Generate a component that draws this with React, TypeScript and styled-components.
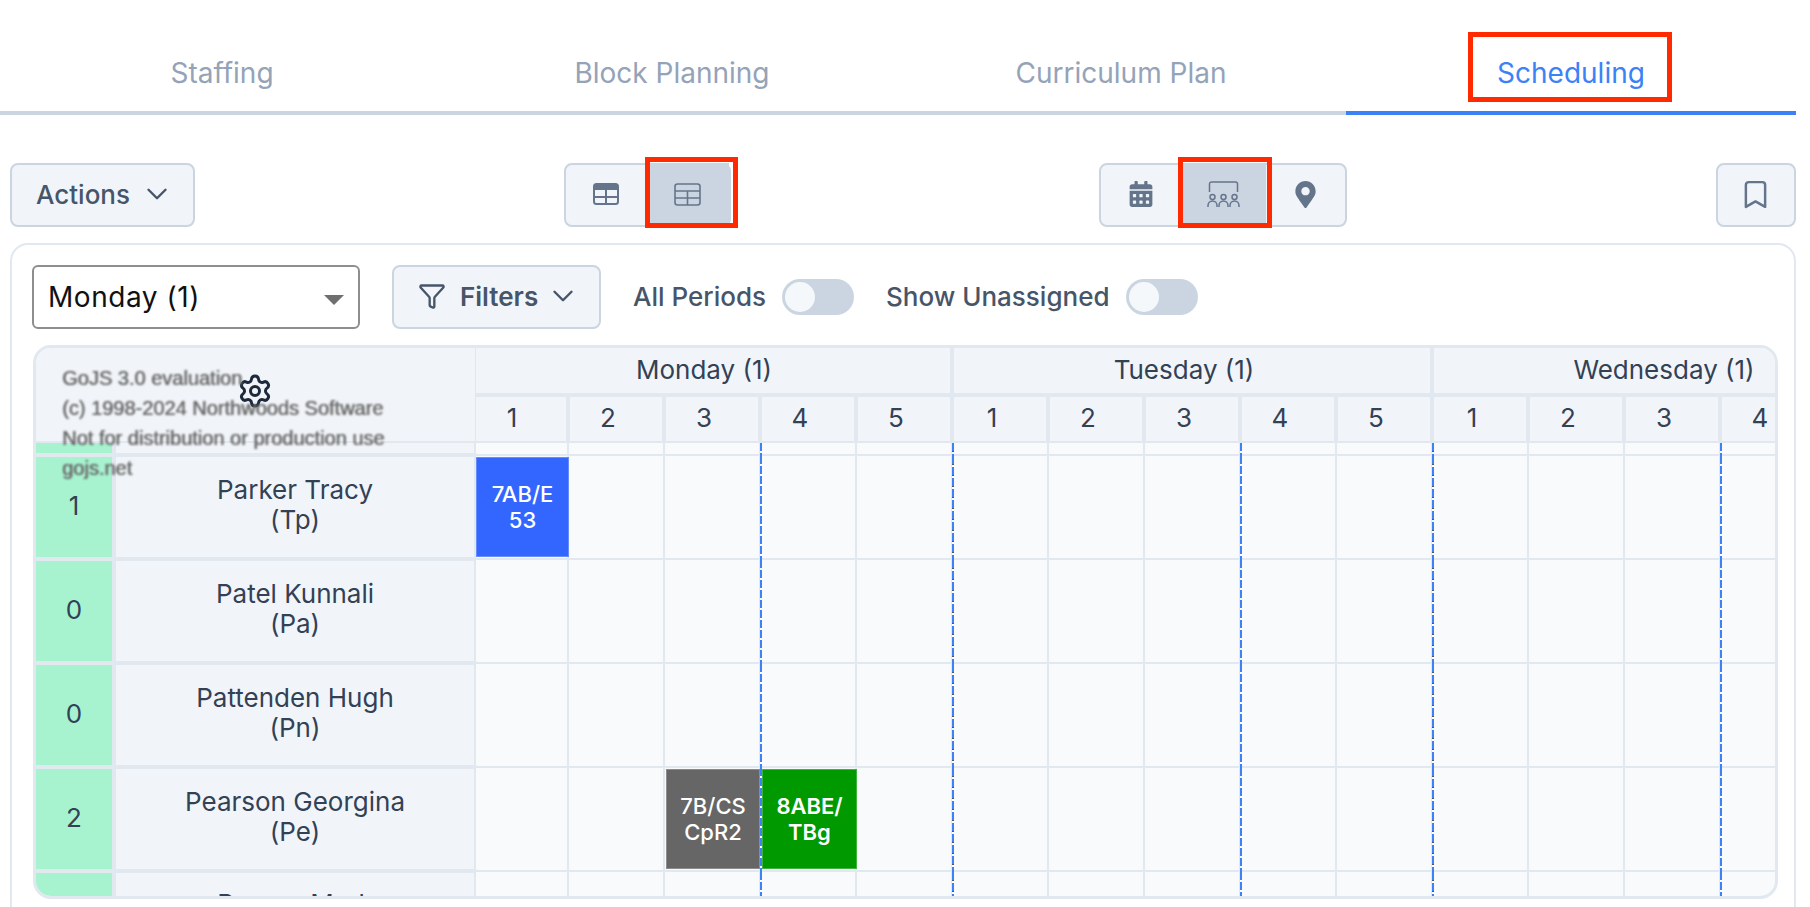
import React from "react";
import styled, { createGlobalStyle } from "styled-components";
import { Bookmark, ChevronDown, Funnel, Settings } from "lucide-react";
import { FaCalendarAlt, FaMapMarkerAlt } from "react-icons/fa";

const GlobalStyle = createGlobalStyle`
  html, body {
    margin: 0;
    padding: 0;
    background: #fff;
    font-family: Inter, "Liberation Sans", sans-serif;
  }
  * { box-sizing: border-box; }
`;

const Page = styled.div`
  width: 1810px;
  height: 907px;
  overflow: hidden;
  padding-right: 14px;
`;

const Tabs = styled.nav`
  display: flex;
  height: 115px;
`;

const Tab = styled.div<{ $active?: boolean; $width: number; $inset: number }>`
  position: relative;
  flex: 0 0 ${(p) => p.$width}px;
  padding: 55px ${(p) => p.$inset}px 0 0;
  text-align: center;
  font-size: 28px;
  line-height: 36px;
  color: ${(p) => (p.$active ? "#3b82f6" : "#94a3b8")};
  border-bottom: 4px solid ${(p) => (p.$active ? "#3b82f6" : "#cbd5e1")};
`;

const TabMark = styled.span`
  position: absolute;
  left: 122px;
  top: 32px;
  width: 204px;
  height: 70px;
  border: 5px solid #ff2a00;
`;

const Toolbar = styled.div`
  display: flex;
  justify-content: space-between;
  align-items: center;
  height: 64px;
  margin-top: 48px;
  padding-left: 10px;
`;

const ActionsButton = styled.button`
  display: flex;
  align-items: center;
  gap: 10px;
  width: 185px;
  height: 64px;
  padding: 0 0 2px 24px;
  font: 500 26px Inter, sans-serif;
  color: #475569;
  background: #f1f5f9;
  border: 2px solid #cbd5e1;
  border-radius: 8px;
`;

const Group = styled.div<{ $width: number }>`
  display: flex;
  width: ${(p) => p.$width}px;
  height: 64px;
  background: #f1f5f9;
  border: 2px solid #cbd5e1;
  border-radius: 8px;
`;

const GroupButton = styled.div<{ $selected?: boolean; $width: number }>`
  position: relative;
  display: flex;
  align-items: center;
  justify-content: center;
  flex: 0 0 ${(p) => p.$width}px;
  margin: -2px 0;
  padding-bottom: 2px;
  color: #64748b;
  background: ${(p) => (p.$selected ? "#cbd5e1" : "transparent")};
`;

const ButtonMark = styled.span<{ $width: number }>`
  position: absolute;
  left: -2px;
  top: -6px;
  width: ${(p) => p.$width}px;
  height: 71px;
  border: 5px solid #ff2a00;
`;

const SquareButton = styled.div`
  display: flex;
  align-items: center;
  justify-content: center;
  width: 80px;
  height: 64px;
  padding-bottom: 2px;
  color: #64748b;
  background: #f1f5f9;
  border: 2px solid #cbd5e1;
  border-radius: 8px;
`;

const Card = styled.section`
  height: 720px;
  margin: 16px 0 0 10px;
  padding: 20px 17px 0 20px;
  border: 2px solid #e2e8f0;
  border-radius: 18px;
`;

const FilterRow = styled.div`
  display: flex;
  align-items: center;
  height: 64px;
`;

const DaySelect = styled.div`
  position: relative;
  display: flex;
  align-items: center;
  width: 328px;
  height: 64px;
  padding-left: 14px;
  font-size: 28px;
  letter-spacing: 0.55px;
  color: #111;
  background: #fff;
  border: 2px solid #8e8e8e;
  border-radius: 6px;
  &::after {
    content: "";
    position: absolute;
    right: 14px;
    top: 28px;
    border-left: 10px solid transparent;
    border-right: 10px solid transparent;
    border-top: 10px solid #6f6f6f;
  }
`;

const FiltersButton = styled.div`
  display: flex;
  align-items: center;
  width: 209px;
  height: 64px;
  margin: 0 32px;
  padding: 0 0 2px 24px;
  font-weight: 600;
  font-size: 26px;
  color: #475569;
  background: #f1f5f9;
  border: 2px solid #cbd5e1;
  border-radius: 8px;
`;

const FiltersLabel = styled.span`
  margin: 0 8px 0 14px;
`;

const SwitchLabel = styled.span`
  padding-bottom: 2px;
  font-weight: 500;
  font-size: 26px;
  color: #475569;
  margin-right: 16px;
`;

const Switch = styled.span`
  display: flex;
  align-items: center;
  flex: 0 0 72px;
  height: 36px;
  margin-right: 32px;
  padding-left: 3px;
  background: #cbd5e1;
  border-radius: 18px;
  &::before {
    content: "";
    width: 30px;
    height: 30px;
    border-radius: 50%;
    background: #f5f8fb;
  }
`;

const Diagram = styled.div`
  position: relative;
  display: flex;
  flex-direction: column;
  width: 1745px;
  height: 554px;
  margin: 16px 0 0 1px;
  overflow: hidden;
  background: #f8fafc;
  border: 3px solid #e2e8f0;
  border-radius: 18px;
`;

const HeadRow = styled.div`
  display: flex;
  flex: 0 0 95px;
`;

const Corner = styled.div`
  position: relative;
  flex: 0 0 440px;
  background: #f1f5f9;
  border-right: 1px solid #e2e8f0;
  border-bottom: 2px solid #e2e8f0;
`;

const Gear = styled(Settings)`
  position: absolute;
  left: 201px;
  top: 25px;
  color: #1e293b;
`;

const Watermark = styled.div`
  position: absolute;
  left: 26px;
  top: 15px;
  font: 20px/30px "Liberation Sans", Arial, sans-serif;
  color: #666;
  white-space: nowrap;
  filter: blur(0.9px);
  text-shadow: 0.7px 0 0 #808080;
`;

const HeadColumns = styled.div`
  display: flex;
  flex-direction: column;
`;

const DayRow = styled.div`
  display: flex;
  height: 49px;
  border-bottom: 4px solid #e2e8f0;
`;

const DayCell = styled.div<{ $width: number }>`
  flex: 0 0 ${(p) => p.$width}px;
  padding-right: 16px;
  text-align: center;
  font-size: 26px;
  line-height: 44px;
  color: #334155;
  background: #f1f5f9;
  border-right: 4px solid #e2e8f0;
  &:first-child {
    padding-right: 18px;
  }
`;

const PeriodRow = styled.div`
  display: flex;
  height: 46px;
  border-bottom: 2px solid #e2e8f0;
`;

const PeriodCell = styled.div<{ $width: number }>`
  flex: 0 0 ${(p) => p.$width}px;
  padding-right: 16px;
  text-align: center;
  font-size: 26px;
  line-height: 42px;
  color: #334155;
  background: #f1f5f9;
  border-right: 4px solid #e2e8f0;
  &:first-child {
    padding-right: 18px;
  }
`;

const StripRow = styled.div`
  display: flex;
  flex: 0 0 14px;
`;

const BodyRow = styled.div`
  display: flex;
  flex: 0 0 104px;
`;

const CountCell = styled.div<{ $height: number }>`
  display: flex;
  align-items: center;
  justify-content: center;
  flex: 0 0 80px;
  height: ${(p) => p.$height}px;
  padding-bottom: ${(p) => (p.$height > 50 ? "4px" : "0")};
  font-size: 26px;
  color: #334155;
  background: #a7f3d0;
  background-clip: padding-box;
  border-right: 4px solid #e2e8f0;
  box-shadow: 0 4px 0 #e2e8f0;
`;

const NameCell = styled.div<{ $height: number; $raise?: number }>`
  display: flex;
  flex-direction: column;
  align-items: center;
  justify-content: center;
  flex: 0 0 360px;
  height: ${(p) => p.$height}px;
  padding-bottom: ${(p) => (p.$height > 50 ? 4 + (p.$raise ?? 0) : 0)}px;
  font-size: 26px;
  line-height: 30px;
  color: #334155;
  background: #f1f5f9;
  border-right: 2px solid #e2e8f0;
  box-shadow: 0 4px 0 #e2e8f0;
`;

const GridCell = styled.div<{ $width: number; $height: number; $lift?: boolean; $dash?: "period" | "day" }>`
  position: relative;
  display: flex;
  flex: 0 0 ${(p) => p.$width}px;
  min-width: 0;
  height: ${(p) => p.$height}px;
  margin-top: ${(p) => (p.$lift ? "-1px" : "0")};
  padding-top: 1px;
  border-right: 2px solid #e2e8f0;
  border-bottom: 2px solid #e2e8f0;
  &::after {
    content: ${(p) => (p.$dash ? '""' : "none")};
    position: absolute;
    z-index: 2;
    top: 0;
    right: -3px;
    bottom: -2px;
    width: 2px;
    background: ${(p) =>
      p.$dash === "day"
        ? "repeating-linear-gradient(#3b82f6 0 8px, #475569 8px 9px, #fff 9px 11px)"
        : "repeating-linear-gradient(#3b82f6 0 8px, #fff 8px 10px)"};
  }
`;

const Chip = styled.div<{ $color: string; $width: number; $offset?: number; $bold?: boolean }>`
  position: relative;
  z-index: 1;
  display: flex;
  align-items: center;
  justify-content: center;
  flex: 0 0 ${(p) => p.$width}px;
  height: 100px;
  margin-left: ${(p) => p.$offset ?? 0}px;
  text-align: center;
  font-weight: ${(p) => (p.$bold ? 600 : 500)};
  font-size: 22px;
  line-height: 26px;
  color: #fff;
  background: ${(p) => p.$color};
  box-shadow: inset 0 0 0 1px rgba(255, 255, 255, 0.25);
`;

const TableSolid = () => (
  <svg width="26" height="22" viewBox="0 0 26 22">
    <rect x="1" y="1" width="24" height="20" rx="2.5" fill="none" stroke="currentColor" strokeWidth="2" />
    <path d="M2 1h22a1 1 0 0 1 1 1v5H1V2a1 1 0 0 1 1-1z" fill="currentColor" />
    <path d="M1 14h24M13 7v14" fill="none" stroke="currentColor" strokeWidth="2" />
  </svg>
);

const TableOutline = () => (
  <svg width="27" height="23" viewBox="0 0 27 23" fill="none" stroke="currentColor" strokeWidth="1.6">
    <rect x="1" y="1" width="25" height="21" rx="2.5" />
    <path d="M1 8h25M1 15h25M13.5 8v14" />
  </svg>
);

const Audience = () => (
  <svg width="33" height="27" viewBox="0 0 33 27" fill="none" stroke="currentColor" strokeWidth="1.5">
    <path d="M2.5 11V3a2 2 0 0 1 2-2h24a2 2 0 0 1 2 2v8" />
    <circle cx="5.500" cy="16" r="2.500" />
    <circle cx="16.500" cy="16" r="2.500" />
    <circle cx="27.500" cy="16" r="2.500" />
    <path d="M1 26v-1.500a4.500 4.500 0 0 1 9 0V26M12 26v-1.500a4.500 4.500 0 0 1 9 0V26M23 26v-1.500a4.500 4.500 0 0 1 9 0V26" />
  </svg>
);

const days = [
  { label: "Monday (1)", width: 478, periods: [1, 2, 3, 4, 5] },
  { label: "Tuesday (1)", width: 480, periods: [1, 2, 3, 4, 5] },
  { label: "Wednesday (1)", width: 480, periods: [1, 2, 3, 4] },
];

// vertical grid columns: width of the cell and which dashed line sits on its right edge
const dashes: Record<number, "day" | "period"> = { 2: "period", 4: "day", 7: "period", 9: "day", 12: "period" };
const columns = Array.from({ length: 14 }, (_, i) => ({
  width: i === 0 ? 93 : 96,
  dash: dashes[i],
}));

const rows = [
  { count: 1, name: "Parker Tracy", short: "(Tp)" },
  { count: 0, name: "Patel Kunnali", short: "(Pa)" },
  { count: 0, name: "Pattenden Hugh", short: "(Pn)" },
  { count: 2, name: "Pearson Georgina", short: "(Pe)" },
  { count: 0, name: "Pearce Mark", short: "(Pm)", raise: 5 },
];

const chips: Record<string, { lines: string[]; color: string; width: number; offset?: number; bold?: boolean }> = {
  "0-0": { lines: ["7AB/E", "53"], color: "#3366ff", width: 93 },
  "3-2": { lines: ["7B/CS", "CpR2"], color: "#666666", width: 94, offset: 1 },
  "3-3": { lines: ["8ABE/", "TBg"], color: "#009900", width: 95, offset: 1, bold: true },
};

export default function App() {
  return (
    <Page>
      <GlobalStyle />
      <Tabs>
        <Tab $width={449} $inset={5}>Staffing</Tab>
        <Tab $width={449} $inset={3}>Block Planning</Tab>
        <Tab $width={448} $inset={2}>Curriculum Plan</Tab>
        <Tab $width={450} $inset={0} $active>
          Scheduling
          <TabMark />
        </Tab>
      </Tabs>

      <Toolbar>
        <ActionsButton>
          Actions
          <ChevronDown size={34} strokeWidth={1.7} />
        </ActionsButton>
        <Group $width={167}>
          <GroupButton $width={81}>
            <TableSolid />
          </GroupButton>
          <GroupButton $width={82} $selected>
            <TableOutline />
            <ButtonMark $width={93} />
          </GroupButton>
        </Group>
        <Group $width={248}>
          <GroupButton $width={79}>
            <FaCalendarAlt size={26} />
          </GroupButton>
          <GroupButton $width={86} $selected>
            <Audience />
            <ButtonMark $width={94} />
          </GroupButton>
          <GroupButton $width={79}>
            <FaMapMarkerAlt size={27} />
          </GroupButton>
        </Group>
        <SquareButton>
          <Bookmark size={33} strokeWidth={1.8} />
        </SquareButton>
      </Toolbar>

      <Card>
        <FilterRow>
          <DaySelect>Monday (1)</DaySelect>
          <FiltersButton>
            <Funnel size={28} strokeWidth={2} />
            <FiltersLabel>Filters</FiltersLabel>
            <ChevronDown size={34} strokeWidth={1.7} />
          </FiltersButton>
          <SwitchLabel>All Periods</SwitchLabel>
          <Switch />
          <SwitchLabel>Show Unassigned</SwitchLabel>
          <Switch />
        </FilterRow>

        <Diagram>
          <HeadRow>
            <Corner>
              <Gear size={36} strokeWidth={2} />
            </Corner>
            <HeadColumns>
              <DayRow>
                {days.map((day) => (
                  <DayCell key={day.label} $width={day.width}>
                    {day.label}
                  </DayCell>
                ))}
              </DayRow>
              <PeriodRow>
                {days.flatMap((day, d) =>
                  day.periods.map((period) => (
                    <PeriodCell key={day.label + period} $width={d === 0 && period === 1 ? 94 : 96}>
                      {period}
                    </PeriodCell>
                  ))
                )}
              </PeriodRow>
            </HeadColumns>
          </HeadRow>

          <StripRow>
            <CountCell $height={10} />
            <NameCell $height={10} />
            {columns.map((col, c) => (
              <GridCell key={c} $width={col.width} $height={13} $dash={col.dash} />
            ))}
          </StripRow>

          {rows.map((row, r) => (
            <BodyRow key={row.name}>
              <CountCell $height={100}>{row.count}</CountCell>
              <NameCell $height={100} $raise={row.raise}>
                <span>{row.name}</span>
                <span>{row.short}</span>
              </NameCell>
              {columns.map((col, c) => {
                const chip = chips[`${r}-${c}`];
                return (
                  <GridCell key={c} $width={col.width} $height={104} $lift $dash={col.dash}>
                    {chip && (
                      <Chip $color={chip.color} $width={chip.width} $offset={chip.offset} $bold={chip.bold}>
                        <span>
                          {chip.lines[0]}
                          <br />
                          {chip.lines[1]}
                        </span>
                      </Chip>
                    )}
                  </GridCell>
                );
              })}
            </BodyRow>
          ))}

          <Watermark>
            GoJS 3.0 evaluation
            <br />
            (c) 1998-2024 Northwoods Software
            <br />
            Not for distribution or production use
            <br />
            gojs.net
          </Watermark>
        </Diagram>
      </Card>
    </Page>
  );
}
